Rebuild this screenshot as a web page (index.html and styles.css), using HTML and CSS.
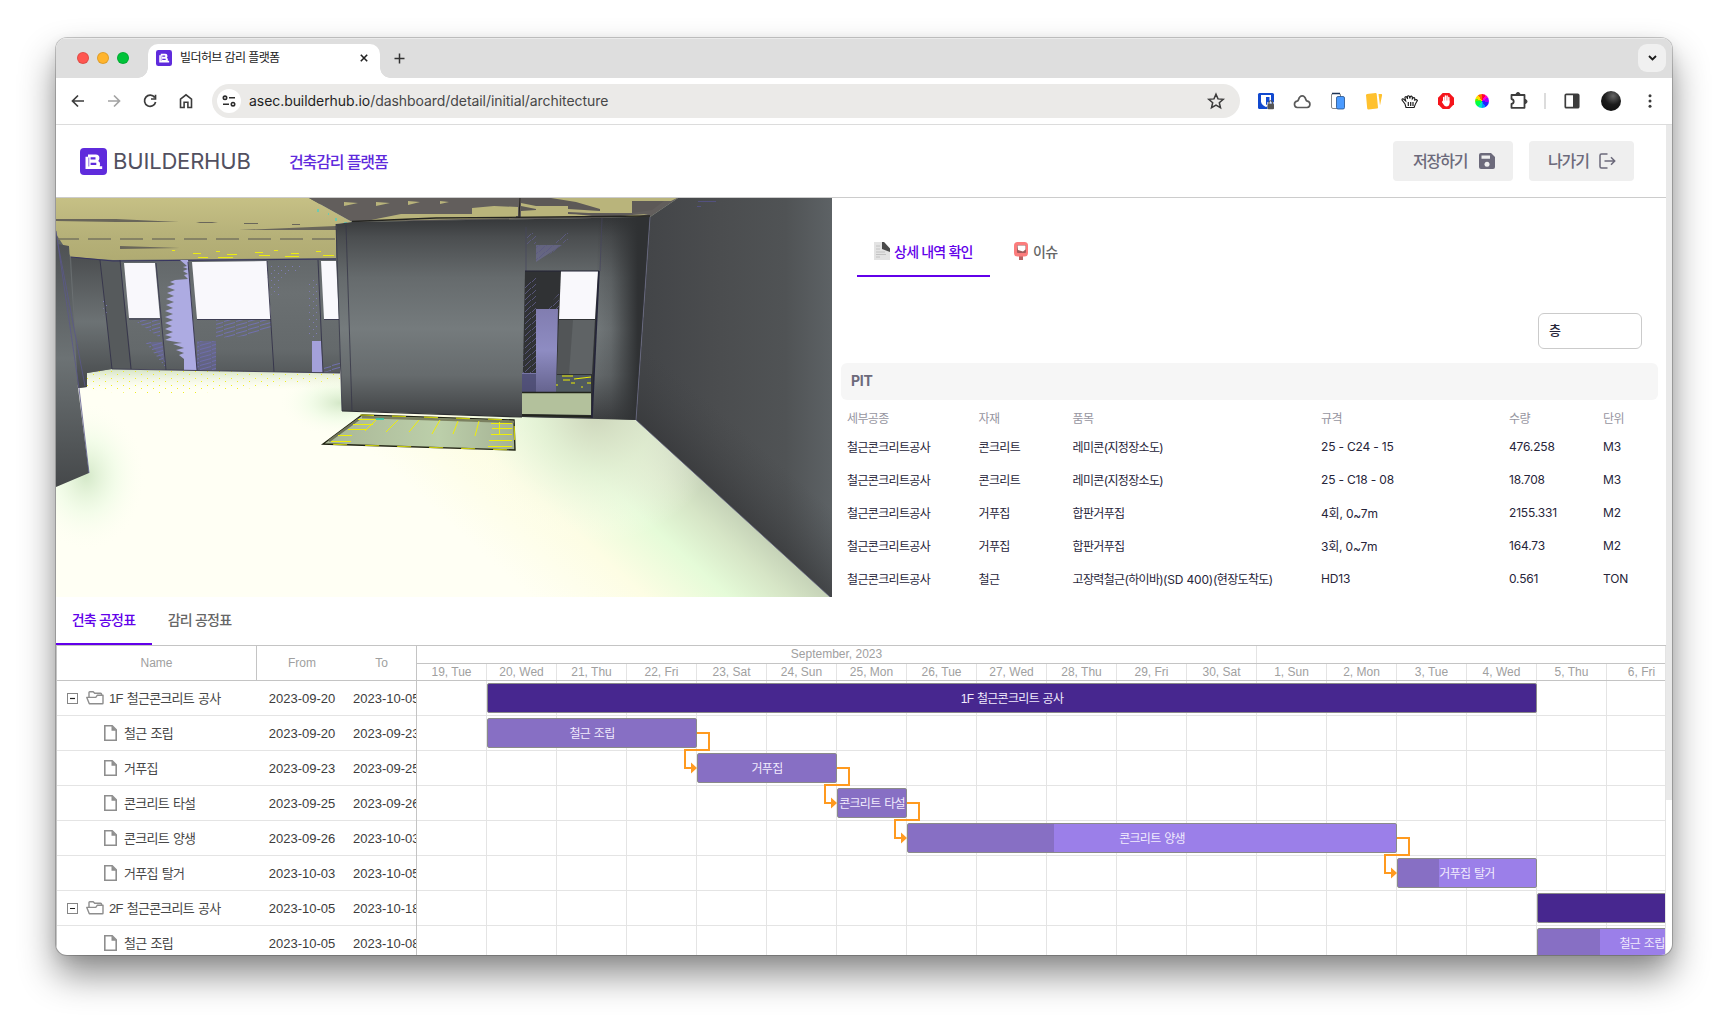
FILE: index.html
```html
<!DOCTYPE html>
<html lang="ko">
<head>
<meta charset="utf-8">
<title>빌더허브 감리 플랫폼</title>
<link rel="stylesheet" href="styles.css">
</head>
<body>
<svg class="defs" width="0" height="0" aria-hidden="true">
  <symbol id="logo" viewBox="0 0 27 27">
    <rect width="27" height="27" rx="4" fill="#5f2bdc"/>
    <path d="M5.500 8.800h2.500V6.500h7.800q3.600 0 3.600 3.500 0 1.900-1.200 3 1.900 1 1.900 3.300 0 1-.5 1.900h2.600v2.700H5.500z" fill="#fff"/>
    <path d="M10.600 10.300h4.900M10.600 15.900h5.700" stroke="#5f2bdc" stroke-width="2.200"/>
    <path d="M8.800 9.500v9" stroke="#5f2bdc" stroke-width=".7"/>
  </symbol>
  <symbol id="folder" viewBox="0 0 18 14">
    <path d="M3 6V1.500q0-.8.800-.8h3.400l1.500 1.600h6q.8 0 .8.800V4M3.300 12.800L.8 6.400h9l1.600-2.200h5.600v8q0 .6-.6.600z" fill="none" stroke="#8e8e8e" stroke-width="1.400" stroke-linejoin="round"/>
  </symbol>
  <symbol id="file" viewBox="0 0 13 16">
    <path d="M.8.800h7.400l4 4v10.400H.8z" fill="none" stroke="#8e8e8e" stroke-width="1.600"/>
    <path d="M7.500.800v5h5z" fill="#8e8e8e"/>
  </symbol>
  <symbol id="minus" viewBox="0 0 11 11">
    <rect x=".5" y=".5" width="10" height="10" fill="#fff" stroke="#858585"/>
    <path d="M3 5.500h5" stroke="#222" stroke-width="1.200"/>
  </symbol>
</svg>

<div class="window">
  <div class="tabstrip">
    <div class="lights"><i class="light red"></i><i class="light amber"></i><i class="light green"></i></div>
    <div class="tab">
      <svg class="favicon"><use href="#logo"/></svg>
      <span class="tab-title">빌더허브 감리 플랫폼</span>
      <svg class="tab-close" viewBox="0 0 8 8"><path d="M.8.800l6.400 6.400M7.200.800L.8 7.200" stroke="#222" stroke-width="1.600"/></svg>
    </div>
    <svg class="tab-new" viewBox="0 0 11 11"><path d="M5.500 .5v10M.5 5.500h10" stroke="#333" stroke-width="1.500"/></svg>
    <div class="tab-search"><svg width="9" height="6" viewBox="0 0 9 6"><path d="M1 1l3.500 3.500L8 1" fill="none" stroke="#1b1b1b" stroke-width="1.800"/></svg></div>
  </div>

  <div class="toolbar">
    <svg class="ico" viewBox="0 0 20 20"><path d="M16 10H5M10 4.500L4.500 10l5.500 5.500" fill="none" stroke="#3c3c3c" stroke-width="1.700"/></svg>
    <svg class="ico" viewBox="0 0 20 20"><path d="M4 10h11M10 4.500l5.500 5.500L10 15.500" fill="none" stroke="#a3a3a3" stroke-width="1.700"/></svg>
    <svg class="ico" viewBox="0 0 20 20"><path d="M14.700 6.500A5.600 5.600 0 1 0 15.600 11M15.500 3.800v4.200h-4.500" fill="none" stroke="#3c3c3c" stroke-width="1.700"/></svg>
    <svg class="ico" viewBox="0 0 20 20"><path d="M4.500 16.500V8.200L10 3.800l5.500 4.400v8.300h-3.600v-5.200H8.100v5.200z" fill="none" stroke="#3c3c3c" stroke-width="1.600"/></svg>
    <div class="omnibox">
      <div class="siteinfo"><svg width="14" height="12" viewBox="0 0 14 12" fill="none" stroke="#2c2c2c" stroke-width="1.600"><circle cx="3" cy="2.800" r="1.700"/><path d="M7 2.800h6M1 9.200h6"/><circle cx="11" cy="9.200" r="1.700"/></svg></div>
      <span class="url">asec.builderhub.io<span class="path">/dashboard/detail/initial/architecture</span></span>
      <svg class="ico star" viewBox="0 0 20 20"><path d="M10 3.200l2 4.700 5.200.4-3.900 3.400 1.200 5-4.500-2.700-4.500 2.700 1.200-5L2.800 8.300 8 7.900z" fill="none" stroke="#3c3c3c" stroke-width="1.500"/></svg>
    </div>
    <svg class="ico" viewBox="0 0 20 20"><rect x="2" y="2" width="16" height="16" rx="1.500" fill="#1149cf"/><path d="M5 4h10v6.500c0 2.500-2.500 4.300-5 5.500-2.500-1.200-5-3-5-5.500z" fill="#fff"/><path d="M10 6h3.500v4.500c0 1.200-1.500 2.500-3.500 3.500z" fill="#1149cf"/><path d="M11 11h7v7h-7z" fill="#fff" opacity=".6"/><rect x="11.500" y="12.800" width="6.500" height="5.400" rx="1" fill="#555"/><path d="M13 13v-1.500a1.700 1.700 0 0 1 3.500 0V13" fill="none" stroke="#555" stroke-width="1.200"/></svg>
    <svg class="ico" viewBox="0 0 20 20"><path d="M5.300 16.500a3.200 3.200 0 0 1-.3-6.300q1-.3 1.400-1.300 1.200-4 3.800-4 2.600 0 3.800 4 .4 1 1.400 1.300a3.200 3.200 0 0 1-.3 6.300z" fill="none" stroke="#5a5a5a" stroke-width="1.700"/></svg>
    <svg class="ico" viewBox="0 0 20 20"><rect x="3.500" y="2.500" width="9" height="15" rx="1.500" fill="#fff" stroke="#888"/><path d="M4 2.500h8" stroke="#1c3354" stroke-width="1.500"/><rect x="8.500" y="5.500" width="8" height="12.500" rx="1.500" fill="#4b9bff" stroke="#24508c" stroke-width=".8"/></svg>
    <svg class="ico" viewBox="0 0 20 20"><path d="M2 4.300q0-1 1-1.200l8.500-1q1-.1 1.200 1l1.300 13.400q.1 1-1 1.100l-8.600.8q-1 0-1.200-1zM14.500 3h3q.8.200.6 1.200L16 14.500z" fill="#ffc12e"/></svg>
    <svg class="ico" viewBox="0 0 20 20"><path d="M6 16.500l-1-3.500-3-4q-.3-1.600 1.500-1l2.200 2-.8-3.500q.6-1.500 1.900-.3l.8 1.700-.3-2.500q1.200-1.400 2.200.2l.3 1.900.5-2q1.400-1 2 .5v2l1-1.300q1.400-.4 1.500 1l-.2 1.300q2-1 2.800.4l-1.700 3-1.600 4.100z" fill="#fff" stroke="#1c1c1c" stroke-width="1.100"/><path d="M8.300 11v4M10.700 11v4M13 11v4" stroke="#1c1c1c" stroke-width="1.200"/></svg>
    <svg class="ico" viewBox="0 0 20 20"><path d="M6.700 2h6.600L18 6.700v6.600L13.300 18H6.700L2 13.300V6.700z" fill="#f5141b"/><path d="M7.700 6.500v5M9.400 4.900v6M11.100 5v6M12.800 6.500v5" stroke="#fff" stroke-width="1.400" stroke-linecap="round"/><path d="M7 9.500h6.500v3.500q-.6 2.500-3.100 2.500-1.900 0-2.800-2L5.800 11z" fill="#fff"/></svg>
    <div class="ico wheel"></div>
    <svg class="ico" viewBox="0 0 20 20"><path d="M3.500 4h13v12.800h-13V13q2.200-.5 2.200-2.500T3.500 8z" fill="none" stroke="#3c3c3c" stroke-width="1.800" stroke-linejoin="round"/><path d="M8 3.500a2 2 0 0 1 4 0zM17 8.500a2 2 0 0 1 0 4z" fill="#3c3c3c" stroke="#3c3c3c"/></svg>
    <i class="divider"></i>
    <svg class="ico" viewBox="0 0 20 20"><rect x="3.300" y="3.300" width="13.400" height="13.400" rx="1" fill="#fff" stroke="#3c3c3c" stroke-width="1.700"/><path d="M11 3h6v14h-6z" fill="#3c3c3c"/></svg>
    <div class="avatar"></div>
    <svg class="ico more" viewBox="0 0 20 20" fill="#3c3c3c"><circle cx="10" cy="4.800" r="1.500"/><circle cx="10" cy="10" r="1.500"/><circle cx="10" cy="15.200" r="1.500"/></svg>
  </div>

  <div class="page">
    <div class="app">
      <header class="header">
        <svg class="logo"><use href="#logo"/></svg>
        <span class="brand">BUILDERHUB</span>
        <span class="subtitle">건축감리 플랫폼</span>
        <div class="actions">
          <div class="btn"><span>저장하기</span><svg width="16" height="16" viewBox="0 0 16 16"><path d="M2 0h10l4 4v10a2 2 0 0 1-2 2H2a2 2 0 0 1-2-2V2a2 2 0 0 1 2-2z" fill="#6c6a7b"/><path d="M2.500 2.500h8.500v3.300H2.500z" fill="#efefef"/><circle cx="8" cy="11.300" r="2.500" fill="#efefef"/></svg></div>
          <div class="btn exit"><span>나가기</span><svg width="17" height="16" viewBox="0 0 17 16" fill="none" stroke="#6c6a7b" stroke-width="1.500"><path d="M8.500 1H2.500Q1 1 1 2.500v11Q1 15 2.500 15h6M5.500 8h10M12 4.300L15.700 8 12 11.700"/></svg></div>
        </div>
      </header>

      <div class="upper">
        <svg class="scene" width="776" height="399" viewBox="0 0 776 399">
          <defs>
            <linearGradient id="wall" x1="0" y1="0" x2="0" y2="1"><stop offset="0" stop-color="#343638"/><stop offset=".1" stop-color="#4b4e50"/><stop offset=".3" stop-color="#666b6d"/><stop offset=".55" stop-color="#757b7d"/><stop offset=".78" stop-color="#666b6d"/><stop offset=".93" stop-color="#4a4d4f"/><stop offset="1" stop-color="#3c3e40"/></linearGradient>
            <linearGradient id="doorwall" gradientUnits="userSpaceOnUse" x1="536" y1="0" x2="590" y2="0"><stop offset="0" stop-color="#2f3133" stop-opacity="0"/><stop offset=".35" stop-color="#2f3133" stop-opacity=".2"/><stop offset=".85" stop-color="#2f3133"/></linearGradient>
            <linearGradient id="right" gradientUnits="userSpaceOnUse" x1="590" y1="0" x2="776" y2="0"><stop offset="0" stop-color="#434548"/><stop offset=".4" stop-color="#4b4d4f"/><stop offset=".75" stop-color="#505355"/><stop offset="1" stop-color="#5d6265"/></linearGradient>
            <linearGradient id="rightfoot" gradientUnits="userSpaceOnUse" x1="677" y1="311" x2="720" y2="262"><stop offset="0" stop-color="#333436" stop-opacity=".6"/><stop offset="1" stop-color="#404244" stop-opacity="0"/></linearGradient>
            <linearGradient id="back" x1="0" y1="0" x2="0" y2="1"><stop offset="0" stop-color="#54585a"/><stop offset=".5" stop-color="#6b7072"/><stop offset=".8" stop-color="#64696b"/><stop offset="1" stop-color="#4c5052"/></linearGradient>
            <linearGradient id="ceil" x1="0" y1="0" x2="0" y2="1"><stop offset="0" stop-color="#c6c085"/><stop offset=".6" stop-color="#b6b179"/><stop offset="1" stop-color="#b0ab72"/></linearGradient>
            <linearGradient id="pillar" x1="0" y1="0" x2="0" y2="1"><stop offset="0" stop-color="#4b4e50"/><stop offset=".5" stop-color="#6c7274"/><stop offset="1" stop-color="#45484a"/></linearGradient>
            <linearGradient id="green" gradientUnits="userSpaceOnUse" x1="677" y1="311" x2="525" y2="477"><stop offset="0" stop-color="#c6d3b8"/><stop offset=".12" stop-color="#d6e5c6"/><stop offset=".3" stop-color="#e5fbd8"/><stop offset=".55" stop-color="#fdfde4"/><stop offset=".9" stop-color="#fffff4"/></linearGradient>
            <radialGradient id="door-glow" gradientUnits="userSpaceOnUse" cx="540" cy="215" r="130"><stop offset="0" stop-color="#cdd6bb"/><stop offset=".45" stop-color="#e3efd4" stop-opacity=".75"/><stop offset="1" stop-color="#fffff4" stop-opacity="0"/></radialGradient>
            <radialGradient id="corner"><stop offset="0" stop-color="#d4e8c8"/><stop offset=".5" stop-color="#ecfbe3" stop-opacity=".6"/><stop offset="1" stop-color="#fffff4" stop-opacity="0"/></radialGradient>
            <linearGradient id="lav" x1="0" y1="0" x2="0" y2="1"><stop offset="0" stop-color="#817db0"/><stop offset=".5" stop-color="#8e8cc2"/><stop offset="1" stop-color="#66648f"/></linearGradient>
            <linearGradient id="mat" x1="0" y1="0" x2="1" y2="0"><stop offset="0" stop-color="#a9b696"/><stop offset=".6" stop-color="#bccfaa"/><stop offset="1" stop-color="#a5b294"/></linearGradient>
            <linearGradient id="far" x1="0" y1="0" x2="0" y2="1"><stop offset="0" stop-color="#d3e2c2"/><stop offset="1" stop-color="#fffff4" stop-opacity="0"/></linearGradient>
            <pattern id="hatch" width="12" height="4" patternUnits="userSpaceOnUse"><path d="M0 3.500L11 .5" stroke="#7270b8" stroke-width=".9"/></pattern>
            <pattern id="diag" width="7" height="6" patternUnits="userSpaceOnUse"><path d="M0 6L6 0" stroke="#5c5a82" stroke-width=".9"/></pattern>
            <pattern id="dots" width="12" height="7" patternUnits="userSpaceOnUse"><path d="M1 1.500h1M7 5.500h1" stroke="#f0ee20" stroke-width="1"/></pattern>
            <pattern id="specks" width="7" height="7" patternUnits="userSpaceOnUse"><path d="M1 2.500h1M5 5.500h1" stroke="#7e7cb4"/></pattern>
          </defs>
          <rect width="776" height="399" fill="#fffff4"/>
          <rect width="776" height="399" fill="url(#green)"/>
          <rect x="380" y="80" width="320" height="300" fill="url(#door-glow)"/>
          <ellipse cx="284" cy="205" rx="62" ry="34" fill="url(#corner)"/>
          <ellipse cx="30" cy="278" rx="60" ry="75" fill="url(#corner)"/>
          <path d="M31 175L56 171 284 175V190L31 194z" fill="url(#far)"/>
          <path d="M31 175L56 171 284 175 284 182 120 197 31 193z" fill="url(#dots)"/>
          <path d="M0 0H260L300 60 284 175 56 171 31 175V189L23 190 0 150z" fill="url(#back)"/>
          <path d="M15 58L44 62 56 171 31 175V189L22 190z" fill="url(#pillar)"/>
          <path d="M44 62L64 62 76 171 56 171z" fill="#565a5c"/>
          <path d="M0 0H253L296 24 280 26V60L57 62 15 59 0 36z" fill="url(#ceil)"/>
          <g fill="#69665a"><path d="M0 21L60 21 123 24 60 24 0 23zM183 32L280 28V32zM64 48L124 50 64 51zM140 24h22l-6 1h-12zM188 25h14v1h-14zM236 26h8v1h-8z"/></g>
          <path d="M0 41H280" stroke="#77745f" stroke-width="1.500" stroke-dasharray="23 9"/>
          <path d="M116 52.500h3M137 55.500h8M160 53.500h4M142 59.500h10M171 56.500h10M199 54.500h8M203 57.500h11M218 52.500h4M235 55.500h8M260 53.500h5M267 57.500h11M162 59.500h15M229 58.500h14" stroke="#ecec10"/>
          <path d="M253 0H622L594 19 384 23 296 24z" fill="#625e5c"/>
          <g fill="#b9b47b"><path d="M288 4l14 1-14 3zM320 4l14 1-14 3zM352 3l12 1-12 3zM384 3l9 1-9 2zM330 19L345 16H460V20L310 23zM416 10l22-2 24 1v9h-46zM465 0h156l-6 3h-39v12h-64l32 4 48-3-12 3H465z"/></g>
          <path d="M465 8L480 11 480 12 465 13zM465 0h30l25 4 24 7v2l-32-2v-3l-32 0-15-3zM512 14l62 3-10 1-52-2zM576 3h32l-12 9-20 3z" fill="#5d5957"/>
          <path d="M464 0l-1 20" stroke="#24211e"/>
          <path d="M296 23.500L380 20 594 18" fill="none" stroke="#23231f" stroke-width="1.300"/>
          <path d="M262 11v3M272 16h1M280 20v3M288 25h3" stroke="#20d9dc"/>
          <path d="M15 59L57 63 280 61" fill="none" stroke="#373560"/>
          <path d="M68 65H99L104 120H73zM136 64L211 63 215 121H141zM265 63H280L283 121H268z" fill="#f9f8fc"/>
          <path d="M124 62H132L141 172H128V161l-5-4 5-2-8-3 8-2-11-4 9-1-17-3 7-3-7-2 8-3-8-3 7-3-7-3 8-3-8-3 8-3-8-3 8-3-7-3 8-3-8-3 8-3-7-3 8-3-8-3 8-3-5-2 5-2 13-1-4-4 4-1-5-3 5-2-5-2 4-1z" fill="#adabe2"/>
          <path d="M256 143H265L267 174H256z" fill="#a4a1da"/>
          <path d="M141 143H160V172H141zM160 122H215V130L190 138 160 140zM89 144H106L110 170zM78 122L104 121V140zM268 174V168l16 -4v8z" fill="url(#hatch)"/>
          <path d="M141 143H160V172H141zM93 144H106L110 166z" fill="#6b69a8" opacity=".45"/>
          <path d="M211 68H250L225 80V98L213 96zM253 80h10v62h-10zM46 95l6 10v15h-4z" fill="url(#specks)"/>
          <path d="M44 62l12 109M64 62l11 109M132 64l9 108M211 63l7 111M262 62l5 113" fill="none" stroke="#33324a" stroke-width=".9"/>
          <path d="M100 65l10 107M73 121h31M141 121.500h74M268 121.500h15M56 171l228 4" fill="none" stroke="#3a3950" stroke-width=".9"/>
          <path d="M0 32L2 46 13 48 22 190 33 275 0 289z" fill="url(#pillar)"/>
          <path d="M2 46L29 188M0 33L23 190 33 275" fill="none" stroke="#5a588c" stroke-width=".8"/>
          <path d="M280 26L296 24 594 19 580 222 466 219 297 213 286 213z" fill="url(#wall)"/>
          <path d="M543 19H594L580 222 536 220z" fill="url(#doorwall)"/>
          <path d="M290 27L296 213M280 26L286 213" stroke="#363648" stroke-width=".8"/>
          <path d="M286 213L466 219" stroke="#2c2d31" stroke-width="1.200"/>
          <path d="M470 29v44M546 20l-2 53" stroke="#46455f" stroke-width=".7"/>
          <path d="M480 47H506L480 64z" fill="#7371a0" opacity=".55"/>
          <path d="M480 47H508L480 65zM471 35h9v11h-9zM495 45l17-12v12z" fill="url(#diag)"/>
          <path d="M594 19L622 0H776V399H774L580 222z" fill="url(#right)"/>
          <path d="M594 19L622 0H776V399H774L580 222z" fill="url(#rightfoot)"/>
          <path d="M594 19L580 222L774 399" fill="none" stroke="#6f6e8e" stroke-width=".7"/>
          <path d="M642 3.500h18M641 8.500h4" stroke="#53517f"/>
          <path d="M469 73H543L536 220 466 219z" fill="#303234"/>
          <path d="M469 85l11-8v98H467zM490 111l14-17v17z" fill="url(#diag)"/>
          <path d="M480 111H502L500 194H466V175H480z" fill="url(#lav)"/>
          <path d="M466 176h14v18h-14z" fill="#45446a" opacity=".7"/>
          <path d="M505 73H542L539 121H503z" fill="#f9f8fc"/>
          <path d="M503 122H539L536 176H501z" fill="#5f6365"/>
          <path d="M503 122l14 0 -4 54h-12z" fill="#45484a" opacity=".5"/>
          <path d="M500 177H535V194H500z" fill="#505a60"/>
          <path d="M506 178h11M518 181l17-2M507 182h7M515 185h4M531 185h4M525 189h2M500 187h2" stroke="#eded00" stroke-width="1.200"/>
          <path d="M466 195H535V217L466 216z" fill="#b3c19c"/>
          <path d="M466 194.500H535M466 217l70 1.500" stroke="#22251b" stroke-width="1.300"/>
          <path d="M543 73L536 220" stroke="#24243a" stroke-width="1.500"/>
          <path d="M469 73H543" stroke="#232334"/>
          <path d="M306 217L458 222 459 252 267 246z" fill="url(#mat)" stroke="#202311" stroke-width="1.400"/>
          <path d="M306 219L458 224" stroke="#7b8060" stroke-width="2.500"/>
          <path d="M303 221L273 243" stroke="#70745b" stroke-width="2.500"/>
          <path d="M304 217l154 5 1 30-192-6" fill="none" stroke="#c4c80c" stroke-width="1.200" stroke-dasharray="14 18"/>
          <path d="M302 221.500h17M297 226.500h20M292 231.500h18M282 237.500h14M275 243.500h20M320 222l-11 11M342 222l-12 12M363 222l-10 12M384 222l-8 14M402 223l-5 13M423 223l-4 15M443.500 224v12M435 225.500h21M436 230.500h20M435 236.500h21M433 242.500h23M432 248.500h24" stroke="#eeee08" stroke-width="1"/>
          <path d="M320 221h8" stroke="#22cfae" stroke-width="1.500"/>
        </svg>

        <section class="detail">
          <nav class="dtabs">
            <div class="dtab active"><svg width="16" height="18" viewBox="0 0 16 18"><path d="M0 0h10l6 7v11H0z" fill="#e3e3e3"/><path d="M8 0h2l6 6.500V10L8 7z" fill="#4a4a4a"/><path d="M2 4h4M2 7h4M2 10h9M2 12.500h10M2 15h4" stroke="#c2c2c2"/></svg><span>상세 내역 확인</span></div>
            <div class="dtab"><svg width="14" height="18" viewBox="0 0 14 18"><rect x="5" y="13" width="4" height="5" fill="#b86464"/><rect width="14" height="14.500" rx="3.500" fill="#fb7c7c"/><rect x="3" y="3" width="9" height="8" rx="1" fill="#a15a5a"/><path d="M3.500 3.500h8v4L9 9.500 4 8z" fill="#fff"/></svg><span>이슈</span></div>
          </nav>
          <div class="filter"><div class="select">층</div></div>
          <div class="group">PIT</div>
          <div class="trow thead"><span>세부공종</span><span>자재</span><span>품목</span><span>규격</span><span>수량</span><span>단위</span></div>
          <div class="trow"><span>철근콘크리트공사</span><span>콘크리트</span><span>레미콘(지정장소도)</span><span class="num">25 - C24 - 15</span><span class="num">476.258</span><span class="num">M3</span></div>
          <div class="trow"><span>철근콘크리트공사</span><span>콘크리트</span><span>레미콘(지정장소도)</span><span class="num">25 - C18 - 08</span><span class="num">18.708</span><span class="num">M3</span></div>
          <div class="trow"><span>철근콘크리트공사</span><span>거푸집</span><span>합판거푸집</span><span class="num">4회, 0<i class="tilde">~</i>7m</span><span class="num">2155.331</span><span class="num">M2</span></div>
          <div class="trow"><span>철근콘크리트공사</span><span>거푸집</span><span>합판거푸집</span><span class="num">3회, 0<i class="tilde">~</i>7m</span><span class="num">164.73</span><span class="num">M2</span></div>
          <div class="trow"><span>철근콘크리트공사</span><span>철근</span><span>고장력철근(하이바)<span class="num">(SD 400)</span>(현장도착도)</span><span class="num">HD13</span><span class="num">0.561</span><span class="num">TON</span></div>
        </section>
      </div>

      <nav class="btabs"><div class="btab active">건축 공정표</div><div class="btab">감리 공정표</div></nav>

      <div class="gantt">
        <div class="tasks">
          <div class="thd"><span class="c-name">Name</span><span class="c-from">From</span><span class="c-to">To</span></div>
          <div class="task parent"><span class="c-name"><svg class="i-minus"><use href="#minus"/></svg><svg class="i-folder"><use href="#folder"/></svg><b>1F 철근콘크리트 공사</b></span><span class="c-from">2023-09-20</span><span class="c-to">2023-10-05</span></div>
          <div class="task"><span class="c-name"><svg class="i-file"><use href="#file"/></svg><b>철근 조립</b></span><span class="c-from">2023-09-20</span><span class="c-to">2023-09-23</span></div>
          <div class="task"><span class="c-name"><svg class="i-file"><use href="#file"/></svg><b>거푸집</b></span><span class="c-from">2023-09-23</span><span class="c-to">2023-09-25</span></div>
          <div class="task"><span class="c-name"><svg class="i-file"><use href="#file"/></svg><b>콘크리트 타설</b></span><span class="c-from">2023-09-25</span><span class="c-to">2023-09-26</span></div>
          <div class="task"><span class="c-name"><svg class="i-file"><use href="#file"/></svg><b>콘크리트 양생</b></span><span class="c-from">2023-09-26</span><span class="c-to">2023-10-03</span></div>
          <div class="task"><span class="c-name"><svg class="i-file"><use href="#file"/></svg><b>거푸집 탈거</b></span><span class="c-from">2023-10-03</span><span class="c-to">2023-10-05</span></div>
          <div class="task parent"><span class="c-name"><svg class="i-minus"><use href="#minus"/></svg><svg class="i-folder"><use href="#folder"/></svg><b>2F 철근콘크리트 공사</b></span><span class="c-from">2023-10-05</span><span class="c-to">2023-10-18</span></div>
          <div class="task"><span class="c-name"><svg class="i-file"><use href="#file"/></svg><b>철근 조립</b></span><span class="c-from">2023-10-05</span><span class="c-to">2023-10-08</span></div>
        </div>
        <div class="timeline">
          <div class="months"><span class="month">September, 2023</span></div>
          <div class="days"><span>19, Tue</span><span>20, Wed</span><span>21, Thu</span><span>22, Fri</span><span>23, Sat</span><span>24, Sun</span><span>25, Mon</span><span>26, Tue</span><span>27, Wed</span><span>28, Thu</span><span>29, Fri</span><span>30, Sat</span><span>1, Sun</span><span>2, Mon</span><span>3, Tue</span><span>4, Wed</span><span>5, Thu</span><span>6, Fri</span></div>
          <div class="lanes">
            <div class="lane"><div class="bar summary" style="grid-column:2/17">1F 철근콘크리트 공사</div></div>
            <div class="lane"><div class="bar" style="grid-column:2/5;--done:100%">철근 조립</div></div>
            <div class="lane"><div class="bar" style="grid-column:5/7;--done:100%">거푸집</div></div>
            <div class="lane"><div class="bar" style="grid-column:7/8;--done:100%">콘크리트 타설</div></div>
            <div class="lane"><div class="bar" style="grid-column:8/15;--done:30%">콘크리트 양생</div></div>
            <div class="lane"><div class="bar" style="grid-column:15/17;--done:30%">거푸집 탈거</div></div>
            <div class="lane"><div class="bar summary" style="grid-column:17/21"></div></div>
            <div class="lane"><div class="bar" style="grid-column:17/20;--done:30%">철근 조립</div></div>
            <svg class="links" width="1248" height="274" viewBox="0 0 1248 274">
              <g fill="none" stroke="#ff9a1f" stroke-width="2">
                <path d="M280 52h12v17h-24v18h6"/><path d="M420 87h12v17h-24v18h6"/><path d="M490 122h12v17h-24v18h6"/><path d="M980 157h12v17h-24v18h6"/>
              </g>
              <path d="M274 81.500l6 5.500-6 5.500zM414 116.500l6 5.500-6 5.500zM484 151.500l6 5.500-6 5.500zM974 186.500l6 5.500-6 5.500z" fill="#ff9a1f"/>
            </svg>
          </div>
        </div>
      </div>
    </div>
    <div class="scrollbar"></div>
  </div>
</div>
</body>
</html>
```
FILE: styles.css
```css
* { box-sizing: border-box; }
body {
  margin: 0;
  height: 1029px;
  overflow: hidden;
  background: #fff;
  font-family: Inter, "Noto Sans CJK KR", sans-serif;
  padding: 38px 0 0 56px;
}
.defs { position: absolute; }
svg { display: block; flex: none; }

.window {
  width: 1616px;
  height: 917px;
  border-radius: 11px;
  overflow: hidden;
  background: #fff;
  display: flex;
  flex-direction: column;
  box-shadow: 0 0 0 1px rgba(0,0,0,.2), 0 20px 36px rgba(0,0,0,.45), 0 4px 14px rgba(0,0,0,.08);
}

/* browser chrome */
.tabstrip {
  height: 40px;
  flex: none;
  background: #dedede;
  display: flex;
  align-items: flex-start;
  padding: 6px 6px 0 21px;
  box-shadow: inset 0 1px #ebebeb;
}
.lights { display: flex; gap: 8px; padding-top: 8px; }
.light { width: 12px; height: 12px; border-radius: 50%; border: 1px solid rgba(0,0,0,.12); }
.red { background: #ff5650; }
.amber { background: #ffb42d; }
.green { background: #00c339; }
.tab {
  margin-left: 19px;
  width: 232px;
  height: 34px;
  background: #fff;
  border-radius: 10px 10px 0 0;
  display: flex;
  align-items: center;
  padding: 0 12px 6px 8px;
  position: relative;
}
.tab::before, .tab::after {
  content: "";
  position: absolute;
  bottom: 0;
  width: 10px;
  height: 10px;
}
.tab::before { left: -10px; background: radial-gradient(circle at 0 0, transparent 9.500px, #fff 10px); }
.tab::after { right: -10px; background: radial-gradient(circle at 100% 0, transparent 9.500px, #fff 10px); }
.favicon { width: 16px; height: 16px; }
.tab-title { margin-left: 8px; font-size: 12px; letter-spacing: -.6px; color: #222; line-height: 16px; white-space: nowrap; }
.tab-close { width: 8px; height: 8px; margin-left: auto; }
.tab-new { width: 11px; height: 11px; margin: 9px 0 0 14px; }
.tab-search {
  margin-left: auto;
  width: 28px;
  height: 28px;
  border-radius: 9px;
  background: #f0f0f0;
  display: grid;
  place-items: center;
}
.toolbar {
  height: 47px;
  flex: none;
  border-bottom: 1px solid #dcdcdc;
  background: #fff;
  display: flex;
  align-items: center;
  gap: 16px;
  padding: 0 12px;
}
.ico { width: 20px; height: 20px; flex: none; }
.omnibox {
  width: 1028px;
  height: 34px;
  border-radius: 17px;
  background: #ebeae8;
  display: flex;
  align-items: center;
  padding: 0 14px 0 5px;
}
.siteinfo { width: 24px; height: 24px; border-radius: 50%; background: #fff; display: grid; place-items: center; }
.url { margin-left: 8px; padding-bottom: 2px; font-size: 14px; letter-spacing: -.06px; color: #1f1f1f; }
.path { color: #474747; }
.star { margin-left: auto; }
.wheel {
  width: 14px;
  height: 14px;
  margin: 0 3px;
  border-radius: 50%;
  background: conic-gradient(#f03 0 30deg, #f0c 30deg 60deg, #90f 60deg 100deg, #22f 100deg 150deg, #09f 150deg 180deg, #0dc 180deg 215deg, #0f4 215deg 265deg, #6e0 265deg 290deg, #fd0 290deg 325deg, #f60 325deg 360deg);
}
.divider { width: 2px; height: 16px; background: #dcdcdc; }
.avatar {
  width: 20px;
  height: 20px;
  border-radius: 50%;
  margin-left: 3px;
  background: radial-gradient(circle at 60% 25%, #666, #1c1c1c 45%, #090909);
}
.more { margin-left: 3px; }

/* application */
.page { flex: 1; display: flex; min-height: 0; }
.app { width: 1610px; display: flex; flex-direction: column; overflow: hidden; }
.scrollbar { width: 6px; height: 675px; background: #e9e9e9; }
.header {
  height: 73px;
  flex: none;
  border-bottom: 1px solid #ccc;
  display: flex;
  align-items: center;
  padding: 0 32px 0 24px;
}
.logo { width: 27px; height: 27px; }
.brand { margin-left: 6px; width: 138px; font-size: 22px; letter-spacing: -.18px; color: #52505f; }
.subtitle { margin-left: 38px; font-size: 16px; font-weight: 500; letter-spacing: -1.150px; word-spacing: .4px; color: #5f2bdc; white-space: nowrap; }
.actions { margin-left: auto; display: flex; gap: 16px; }
.btn {
  height: 40px;
  width: 120px;
  background: #efefef;
  border-radius: 4px;
  display: flex;
  align-items: center;
  justify-content: space-between;
  padding: 0 18px 0 20px;
  font-size: 16px;
  letter-spacing: -1.100px;
  color: #6c6a7b;
  font-weight: 500;
}
.btn span { padding-bottom: 2px; }
.exit { width: 105px; padding-left: 19px; }

.upper { display: flex; height: 399px; flex: none; }
.detail { flex: 1; padding: 30px 8px 0 9px; overflow: hidden; }
.dtabs { display: flex; padding-left: 16px; height: 49px; }
.dtab {
  height: 49px;
  display: flex;
  align-items: center;
  gap: 5px;
  padding: 0 7px 3px 24px;
  font-size: 14px;
  font-weight: 500;
  letter-spacing: -.75px;
  color: #666;
}
.dtab span { padding-bottom: 1px; }
.dtab.active {
  width: 133px;
  gap: 4px;
  padding: 0 0 1px 17px;
  color: #6200ea;
  border-bottom: 2px solid #6200ea;
}
.filter { display: flex; justify-content: flex-end; padding: 36px 16px 14px 0; }
.select {
  width: 104px;
  height: 36px;
  border: 1px solid #cbcbcb;
  border-radius: 6px;
  padding-left: 10px;
  font-size: 13px;
  font-weight: 500;
  line-height: 33px;
  color: #27253a;
}
.group {
  height: 37px;
  border-radius: 6px;
  background: #f6f6f6;
  padding-left: 10px;
  font-size: 14px;
  font-weight: 700;
  letter-spacing: -.2px;
  line-height: 36px;
  color: #6c6a7b;
}
.trow {
  display: grid;
  grid-template-columns: 131.500px 94px 248.500px 188px 94px 1fr;
  padding: 0 0 1px 6px;
  height: 33px;
  align-items: center;
  font-size: 12px;
  letter-spacing: -.65px;
  color: #27253a;
  white-space: nowrap;
}
.num { letter-spacing: -.18px; }
.tilde { font-style: normal; position: relative; top: 2px; }
.thead { height: 24px; margin-top: 6px; color: #96959f; }

.btabs { display: flex; height: 49px; flex: none; border-bottom: 1px solid #c4c4c4; }
.btab {
  height: 48px;
  width: 96px;
  display: grid;
  place-items: center;
  font-size: 14px;
  font-weight: 500;
  letter-spacing: -.75px;
  color: #666;
  padding: 0 1px 5px 0;
  white-space: nowrap;
}
.btab.active { color: #6200ea; box-shadow: inset 0 -2px #6200ea; }

/* gantt chart */
.gantt { flex: 1; display: flex; min-height: 0; font-family: "Liberation Sans", "Noto Sans CJK KR", sans-serif; }
.tasks { width: 361px; flex: none; border-left: 1px solid #c4c4c4; border-right: 1px solid #c4c4c4; overflow: hidden; }
.thd, .task { display: flex; white-space: nowrap; }
.thd { height: 35px; border-bottom: 1px solid #c4c4c4; color: #a0a0a0; font-size: 12px; line-height: 34px; text-align: center; }
.thd .c-name { border-right: 1px solid #c4c4c4; }
.thd .c-to { width: 69px; }
.task { height: 35px; border-bottom: 1px solid #e4e4e4; font-size: 13px; line-height: 35px; color: #3c3c3c; }
.c-name { width: 200px; flex: none; }
.c-from { width: 90px; flex: none; text-align: center; }
.c-to { width: 70px; flex: none; }
.task .c-to { padding-left: 6px; }
.task .c-name { display: flex; align-items: center; padding-left: 47px; }
.task.parent .c-name { padding-left: 10px; }
.task b { font-weight: 400; letter-spacing: -.75px; word-spacing: 1.200px; color: #474747; line-height: 20px; padding-top: 1px; }
.i-file { width: 13px; height: 16px; margin-right: 7px; }
.i-minus { width: 11px; height: 11px; margin-right: 8px; }
.i-folder { width: 18px; height: 14px; margin-right: 5px; }

.timeline { width: 1249px; overflow: hidden; border-right: 1px solid #e4e4e4; font-size: 12px; color: #a0a0a0; }
.months { height: 18px; border-bottom: 1px solid #c4c4c4; }
.month { display: block; width: 840px; height: 17px; border-right: 1px solid #e4e4e4; text-align: center; line-height: 16px; }
.days { display: grid; grid-template-columns: repeat(18, 70px); height: 17px; border-bottom: 1px solid #c4c4c4; text-align: center; line-height: 16px; }
.days span { border-right: 1px solid #e4e4e4; }
.lanes { position: relative; background: repeating-linear-gradient(90deg, transparent 0 69px, #e4e4e4 69px 70px); }
.lane { display: grid; grid-template-columns: repeat(21, 70px); height: 35px; padding-top: 2px; border-bottom: 1px solid #e4e4e4; }
.bar {
  height: 30px;
  border: 1px solid #8a8a8a;
  border-radius: 2px;
  color: #f1ebfd;
  text-align: center;
  line-height: 30px;
  letter-spacing: -.7px;
  word-spacing: 1px;
  white-space: nowrap;
  background: linear-gradient(90deg, #876fc4 var(--done, 0), #9b7fe9 0);
}
.bar.summary { background: #47278f; }
.links { position: absolute; left: 0; top: 0; }
```
